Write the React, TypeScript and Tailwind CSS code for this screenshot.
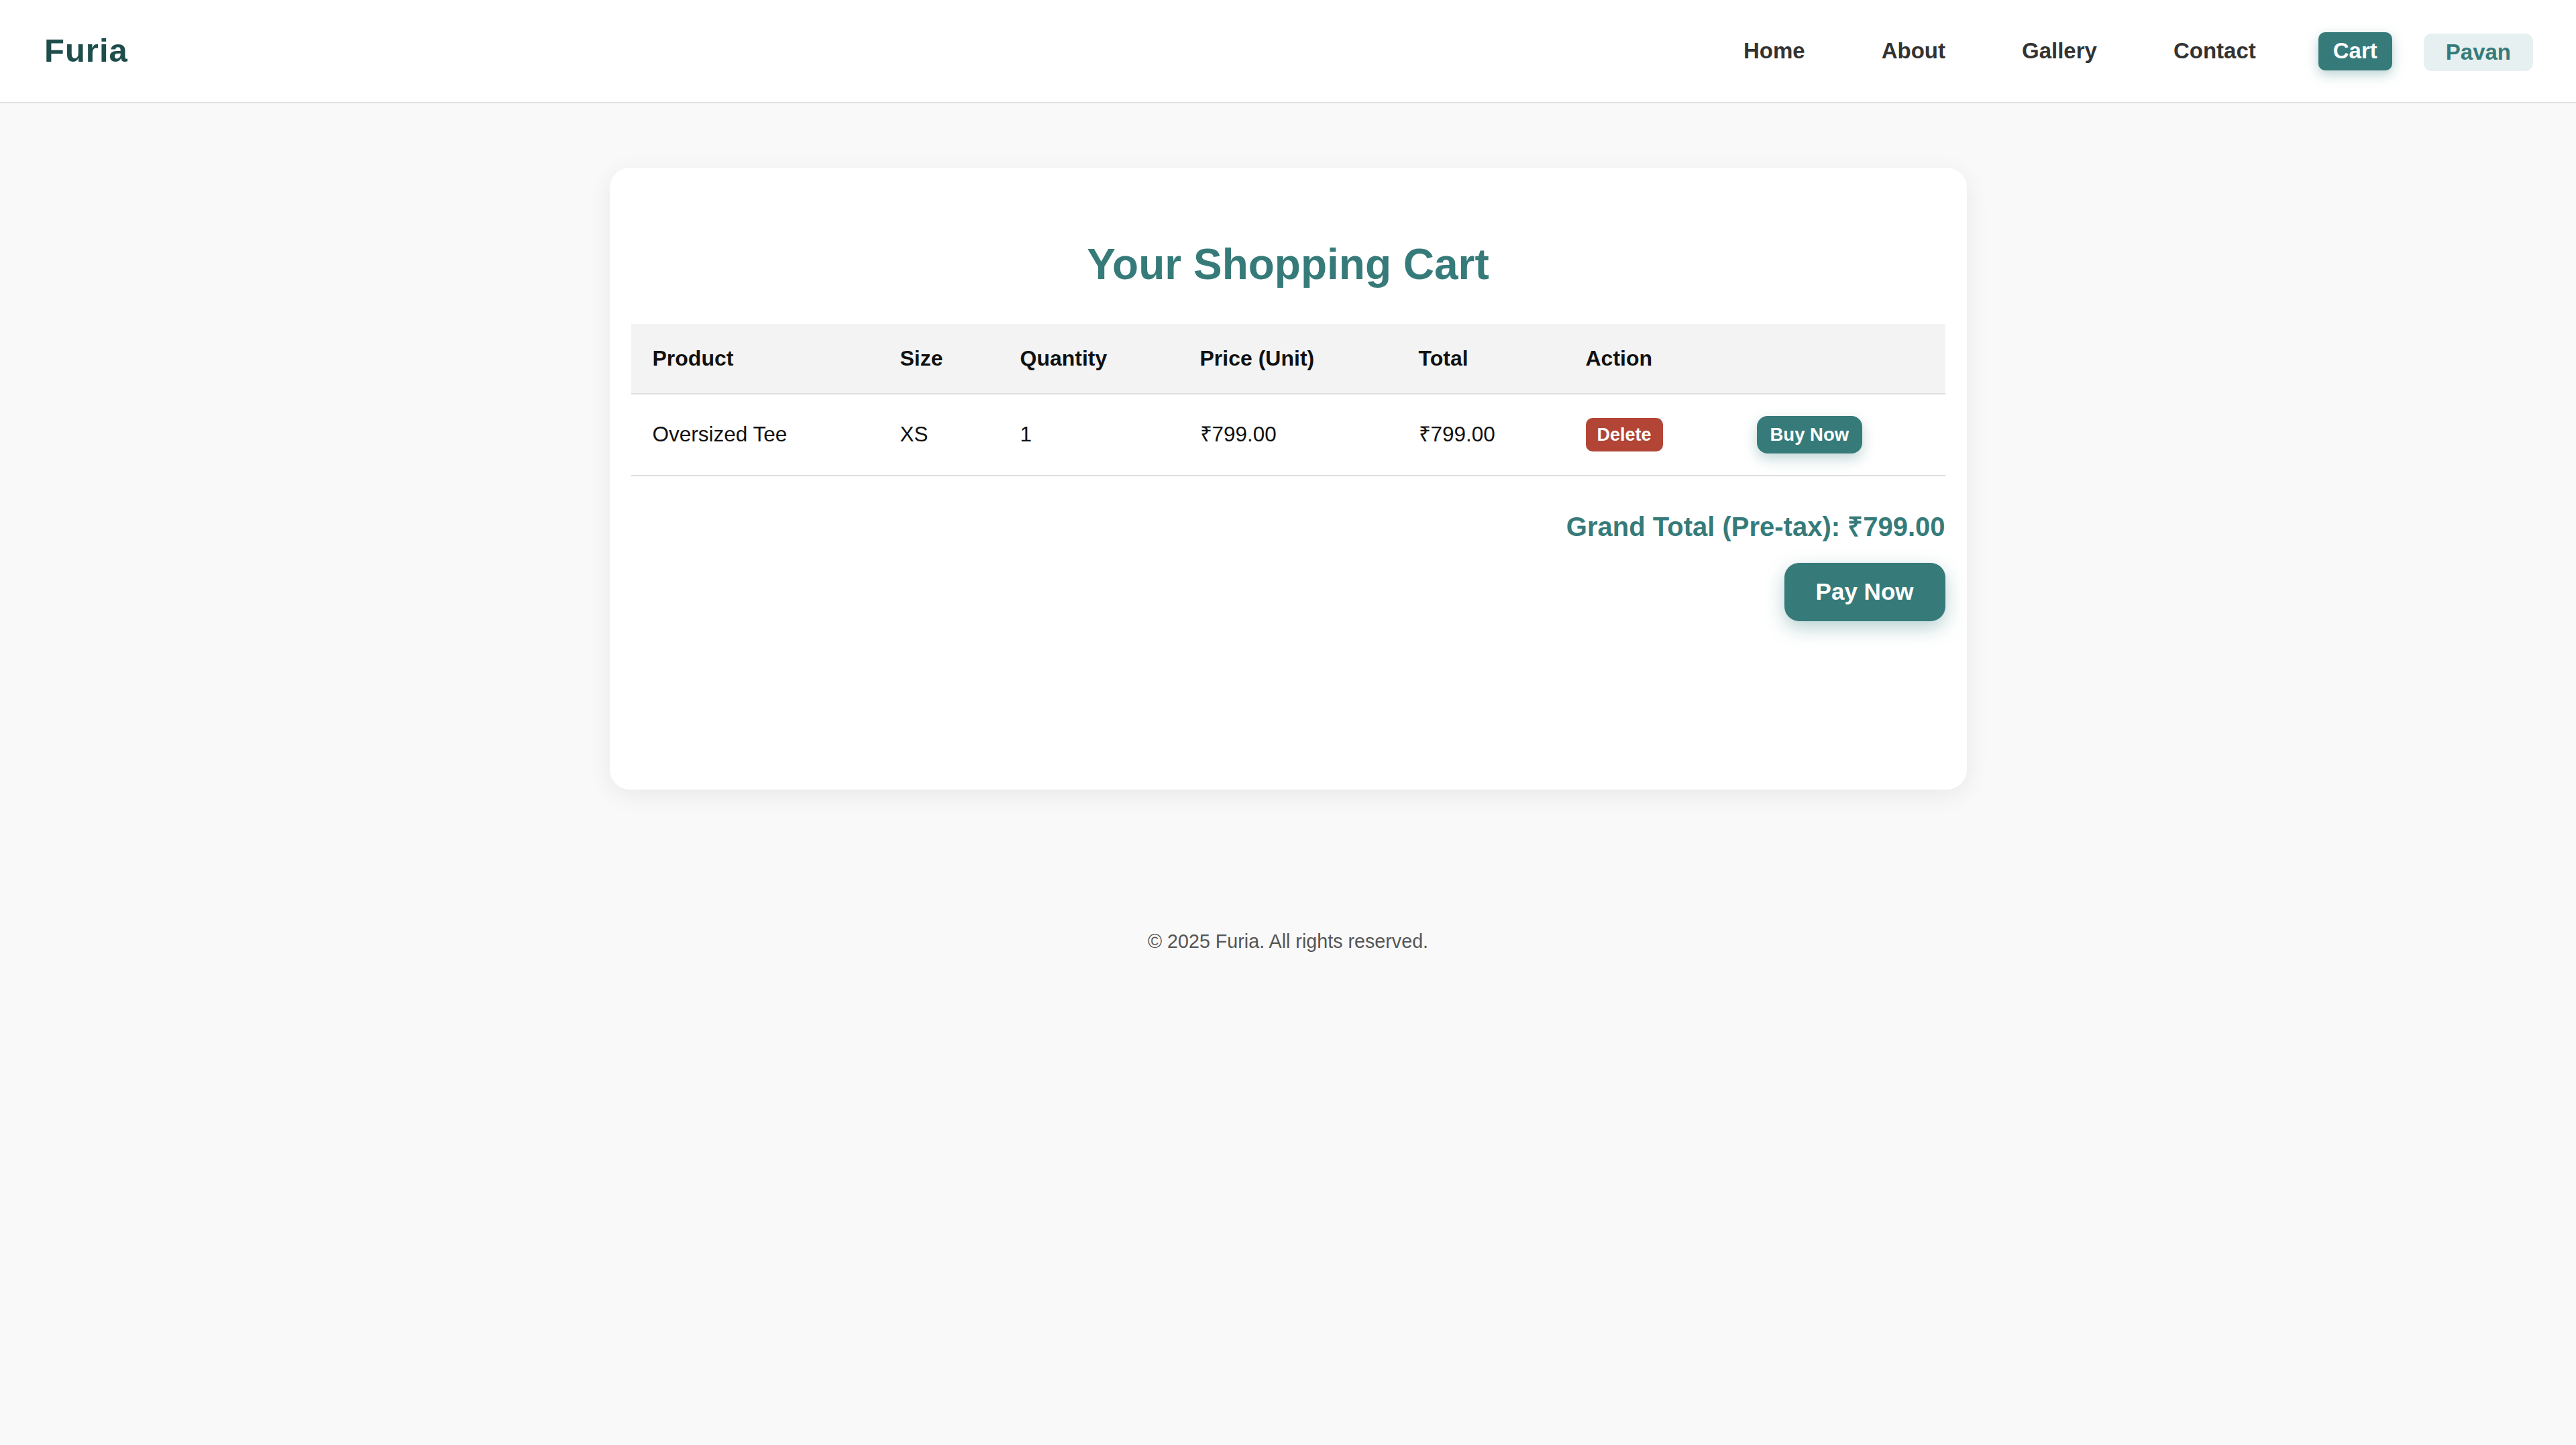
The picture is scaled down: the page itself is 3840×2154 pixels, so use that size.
const teal = "#367b7a";

const cols = [
  { label: "Product", w: "w-[369px]" },
  { label: "Size", w: "w-[179px]" },
  { label: "Quantity", w: "w-[268px]" },
  { label: "Price (Unit)", w: "w-[326px]" },
  { label: "Total", w: "w-[249px]" },
  { label: "Action", w: "w-[255px]" },
  { label: "", w: "w-[313px]" },
];

function Header() {
  return (
    <header className="box-border flex h-[154px] items-center justify-between border-b-2 border-[#e4e4e4] bg-white pl-[66px] pr-[64px]">
      <h1 className="text-[49px] font-bold tracking-[1px] text-[#1e4d4c]">Furia</h1>
      <nav className="flex items-center">
        <ul className="flex items-center gap-[72px] text-[33px] font-bold text-[#333]">
          <li className="px-[21px]">Home</li>
          <li className="px-[21px]">About</li>
          <li className="px-[21px]">Gallery</li>
          <li className="px-[21px]">Contact</li>
          <li className="flex h-[57px] items-center rounded-[10px] bg-[#367b7a] px-[22px] text-white shadow-[0_6px_18px_rgba(54,123,122,0.35)]">
            Cart
          </li>
        </ul>
        <span className="ml-[47px] mt-[3px] flex h-[56px] items-center rounded-[12px] bg-[#e6f0f0] px-[33px] text-[33px] font-bold text-[#367b7a]">
          Pavan
        </span>
      </nav>
    </header>
  );
}

function CartTable() {
  return (
    <table className="w-[1959px] table-fixed border-collapse text-left">
      <thead>
        <tr className="border-b-2 border-[#dddddd] bg-[#f3f3f3]">
          {cols.map((c) => (
            <th key={c.label || "blank"} className={`${c.w} px-[32px] py-[33px] text-[32px] font-bold leading-[37px] text-[#111]`}>
              {c.label}
            </th>
          ))}
        </tr>
      </thead>
      <tbody>
        <tr className="border-b-2 border-[#dddddd] text-[31.5px] text-[#111]">
          <td className="px-[32px] py-[32px] align-middle">Oversized Tee</td>
          <td className="px-[32px] py-[32px] align-middle">XS</td>
          <td className="px-[32px] py-[32px] align-middle">1</td>
          <td className="px-[32px] py-[32px] align-middle">₹799.00</td>
          <td className="px-[32px] py-[32px] align-middle">₹799.00</td>
          <td className="px-[32px] py-[32px] align-middle">
            <button className="flex h-[50px] items-center rounded-[10px] bg-[#b24535] px-[17px] text-[27px] font-bold text-white">
              Delete
            </button>
          </td>
          <td className="px-[32px] py-[32px] align-middle">
            <button className="flex h-[56px] items-center rounded-[16px] bg-[#367b7a] px-[20px] text-[27.5px] font-bold text-white shadow-[0_8px_20px_rgba(54,123,122,0.3)]">
              Buy Now
            </button>
          </td>
        </tr>
      </tbody>
    </table>
  );
}

export default function App() {
  return (
    <div
      className="min-h-screen bg-[#f9f9f9]"
      style={{ fontFamily: '"Liberation Sans", Arial, Helvetica, sans-serif' }}
    >
      <Header />
      <main className="flex justify-center pt-[96px]">
        <section className="box-border h-[927px] w-[2023px] rounded-[30px] bg-white p-[32px] shadow-[0_8px_36px_rgba(0,0,0,0.07)]">
          <h2 className="mb-[52px] mt-[75px] text-center text-[64px] font-bold leading-[74px]" style={{ color: teal }}>
            Your Shopping Cart
          </h2>
          <CartTable />
          <div className="flex flex-col items-end">
            <p className="mt-[52px] text-[40px] font-bold leading-[46px] text-[#367b7a]">
              Grand Total (Pre-tax): ₹799.00
            </p>
            <button className="mt-[31px] flex h-[87px] items-center rounded-[22px] bg-[#367b7a] px-[47px] text-[35px] font-bold text-white shadow-[0_10px_28px_rgba(54,123,122,0.35)]">
              Pay Now
            </button>
          </div>
        </section>
      </main>
      <footer className="mt-[210px] text-center text-[28.7px] leading-[33px] text-[#555]">
        © 2025 Furia. All rights reserved.
      </footer>
    </div>
  );
}
